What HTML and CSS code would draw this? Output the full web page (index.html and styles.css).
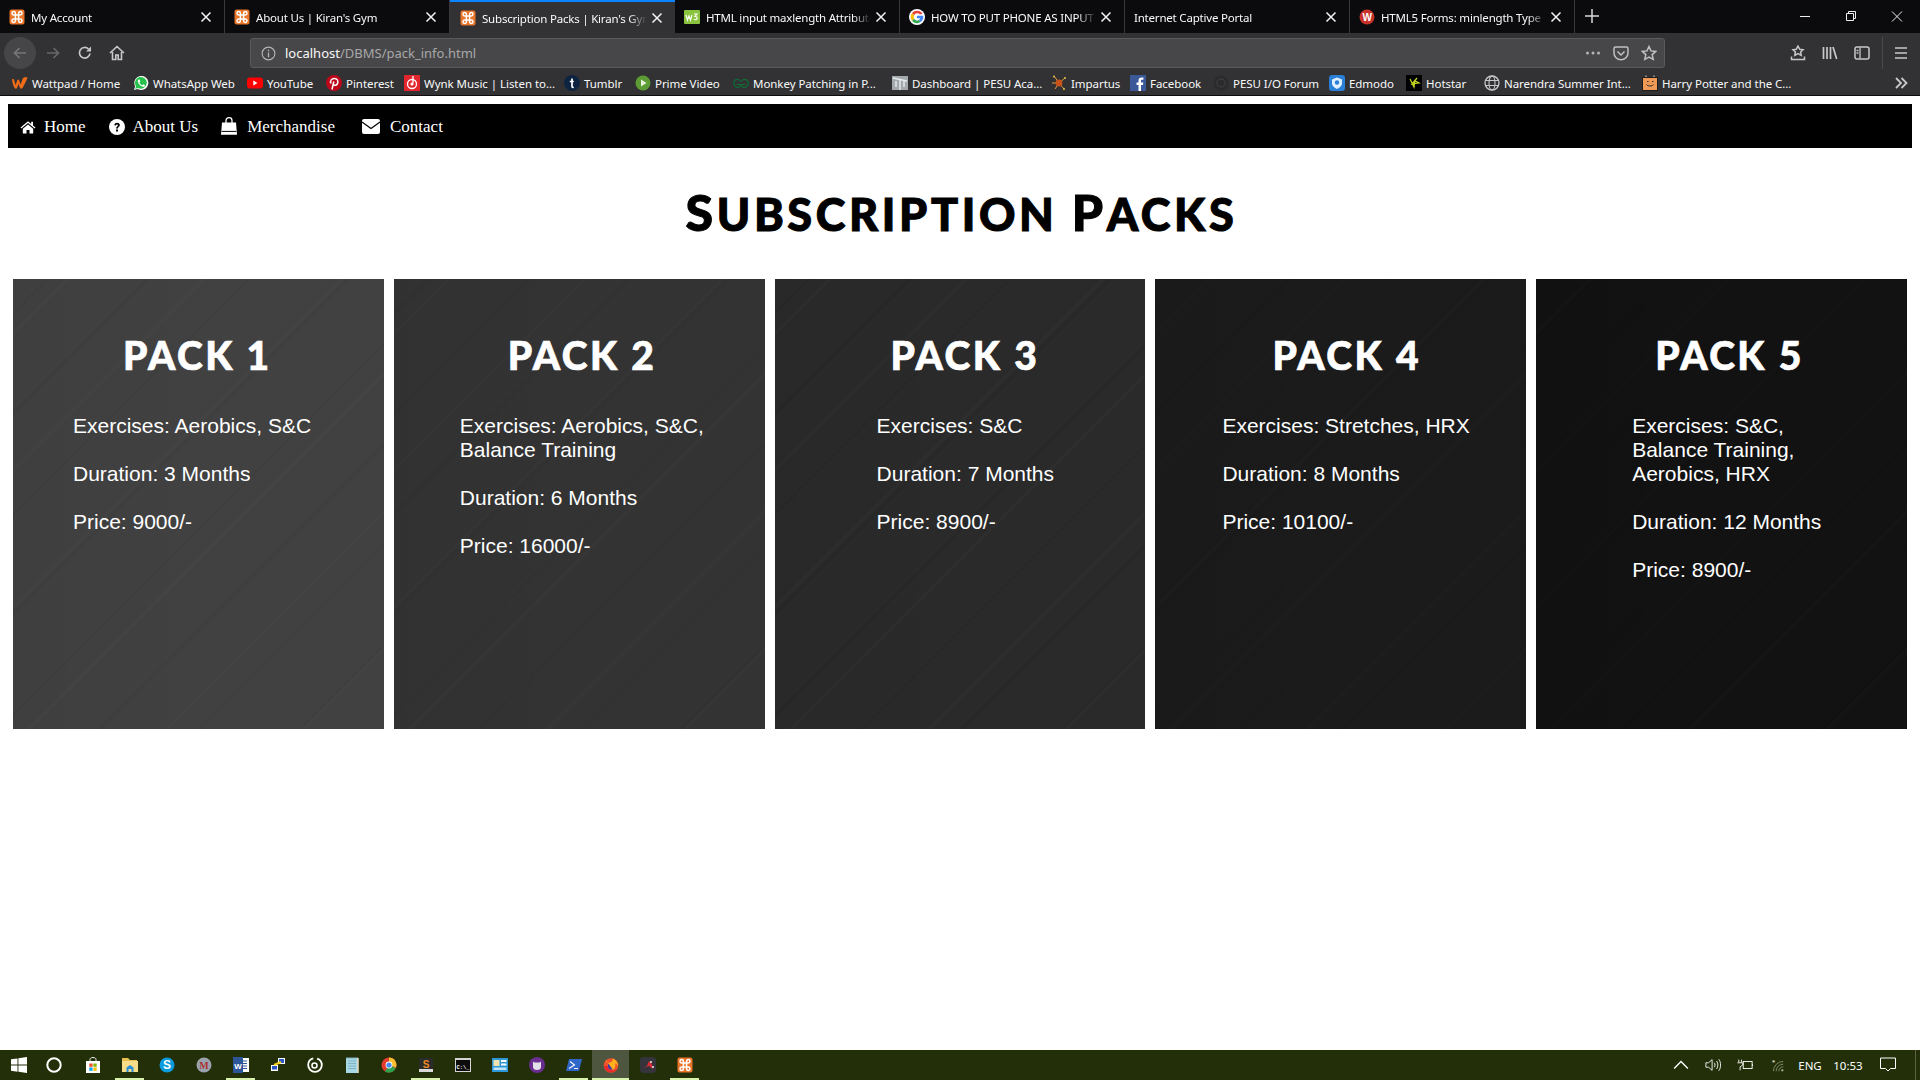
FILE: index.html
```html
<!DOCTYPE html>
<html lang="en">
<head>
<meta charset="utf-8">
<title>Subscription Packs | Kiran's Gym</title>
<link rel="stylesheet" href="styles.css">
</head>
<body>
<svg class="sprite" aria-hidden="true">
  <symbol id="xampp" viewBox="0 0 16 16"><rect x="0.5" y="0.5" width="15" height="15" rx="2" fill="#e8752a"/><path d="M6 6H4.700a1.700 1.700 0 1 1 1.700-1.700V11.700a1.700 1.700 0 1 1-1.700-1.700H11.300a1.700 1.700 0 1 1-1.700 1.700V4.300a1.700 1.700 0 1 1 1.700 1.700H6" fill="none" stroke="#fff" stroke-width="1.500"/></symbol>
  <symbol id="close" viewBox="0 0 12 12"><path d="M1.500 1.500l9 9M10.500 1.500l-9 9" stroke="#f4f4f4" stroke-width="1.500" fill="none"/></symbol>
</svg>

<header class="chrome">
  <div class="tabstrip">
    <div class="tab sep"><svg class="fav"><use href="#xampp"/></svg><span class="tab-label">My Account</span><svg class="tab-x"><use href="#close"/></svg></div>
    <div class="tab sep"><svg class="fav"><use href="#xampp"/></svg><span class="tab-label">About Us | Kiran's Gym</span><svg class="tab-x"><use href="#close"/></svg></div>
    <div class="tab active"><svg class="fav"><use href="#xampp"/></svg><span class="tab-label">Subscription Packs | Kiran's Gym</span><svg class="tab-x"><use href="#close"/></svg></div>
    <div class="tab sep"><svg class="fav" viewBox="0 0 16 16"><rect y="1" width="16" height="14" rx="1" fill="#8ac43f"/><path d="M2 6l1.500 5 1.500-4 1.500 4L8 6M10 5h3l-2 2.500c2 0 2.500 1 2 2.300-.5 1.200-2.400 1.200-3.200.2" fill="none" stroke="#fff" stroke-width="1.200"/></svg><span class="tab-label">HTML input maxlength Attribute</span><svg class="tab-x"><use href="#close"/></svg></div>
    <div class="tab sep"><svg class="fav" viewBox="0 0 16 16"><circle cx="8" cy="8" r="8" fill="#fff"/><path d="M13.500 4.800A6.300 6.300 0 0 0 3 4.300l2.200 1.900a3.300 3.300 0 0 1 5.700-.7z" fill="#ea4335"/><path d="M3 4.300a6.300 6.300 0 0 0 0 7.400l2.200-1.900a3.300 3.300 0 0 1 0-3.600z" fill="#fbbc05"/><path d="M3 11.700a6.300 6.300 0 0 0 8.700 1.400L9.600 11a3.300 3.300 0 0 1-4.400-1.200z" fill="#34a853"/><path d="M14.200 6.800H8v2.500h3.400a3 3 0 0 1-1.800 1.700l2.100 2.100c1.600-1.300 3-3.600 2.500-6.300z" fill="#4285f4"/></svg><span class="tab-label">HOW TO PUT PHONE AS INPUT</span><svg class="tab-x"><use href="#close"/></svg></div>
    <div class="tab sep no-fav"><span class="tab-label">Internet Captive Portal</span><svg class="tab-x"><use href="#close"/></svg></div>
    <div class="tab sep"><svg class="fav" viewBox="0 0 16 16"><circle cx="8" cy="8" r="7.500" fill="#c8322a"/><text x="8" y="11.500" class="fav-letter">W</text></svg><span class="tab-label">HTML5 Forms: minlength Type</span><svg class="tab-x"><use href="#close"/></svg></div>
    <svg class="newtab" viewBox="0 0 14 14"><path d="M7 0v14M0 7h14" stroke="#d8d8d8" stroke-width="1.500"/></svg>
    <div class="winbtns">
      <svg viewBox="0 0 46 33"><path d="M18 16.500h10" stroke="#eee"/></svg>
      <svg viewBox="0 0 46 33"><path d="M18.500 13.500h7v7h-7zM20.500 13.500v-2h7v7h-2" fill="none" stroke="#eee"/></svg>
      <svg viewBox="0 0 46 33"><path d="M18 11.500l10 10M28 11.500l-10 10" stroke="#eee"/></svg>
    </div>
  </div>

  <div class="toolbar">
    <span class="tbtn back"><svg viewBox="0 0 16 16"><path d="M14 8H3M7.500 3L2.500 8l5 5" fill="none" stroke="#77777a" stroke-width="1.700"/></svg></span>
    <span class="tbtn fwd"><svg viewBox="0 0 16 16"><path d="M2 8h11M8.500 3l5 5-5 5" fill="none" stroke="#68686a" stroke-width="1.700"/></svg></span>
    <span class="tbtn"><svg viewBox="0 0 16 16"><path d="M13 8.500A5.300 5.300 0 1 1 11.500 4" fill="none" stroke="#c8c8ca" stroke-width="1.700"/><path d="M14 1.500v5h-5z" fill="#c8c8ca"/></svg></span>
    <span class="tbtn"><svg viewBox="0 0 16 16"><path d="M1 8l7-6.500L15 8M3.500 7v7.500h3.300V10h2.400v4.500h3.300V7" fill="none" stroke="#c8c8ca" stroke-width="1.600"/></svg></span>
    <div class="urlbar">
      <svg class="info" viewBox="0 0 16 16"><circle cx="8" cy="8" r="6.800" fill="none" stroke="#b4b4b6" stroke-width="1.200"/><path d="M8 7v5M8 4v1.500" stroke="#b4b4b6" stroke-width="1.400"/></svg>
      <span class="url"><span class="url-host">localhost</span>/DBMS/pack_info.html</span>
      <span class="url-actions">
        <svg viewBox="0 0 16 16"><circle cx="2.500" cy="8" r="1.500" fill="#b4b4b6"/><circle cx="8" cy="8" r="1.500" fill="#b4b4b6"/><circle cx="13.500" cy="8" r="1.500" fill="#b4b4b6"/></svg>
        <svg viewBox="0 0 16 16"><path d="M1 3.500C1 2.500 1.700 2 2.500 2h11c.8 0 1.500.5 1.500 1.500V8A7 6.800 0 0 1 1 8zM4.500 6.500L8 10l3.500-3.500" fill="none" stroke="#c0c0c2" stroke-width="1.500"/></svg>
        <svg viewBox="0 0 16 16"><path d="M8 1.500l2 4.400 4.700.5-3.500 3.200 1 4.700L8 12l-4.200 2.300 1-4.700-3.500-3.200 4.700-.5z" fill="none" stroke="#c0c0c2" stroke-width="1.500"/></svg>
      </span>
    </div>
    <div class="toolbar-right">
      <span class="tbtn-r"><svg viewBox="0 0 16 16"><path d="M8 1l1.700 3.300 3.300.4-2.400 2.300.6 3.300L8 8.700 4.800 10.300l.6-3.300L3 4.700l3.300-.4zM1.500 11.500v3h13v-3" fill="none" stroke="#c8c8ca" stroke-width="1.500"/></svg></span>
      <span class="tbtn-r"><svg viewBox="0 0 16 16"><path d="M1.500 2v12M5 2v12M8.500 2v12M11 2l3.700 12" fill="none" stroke="#c8c8ca" stroke-width="1.700"/></svg></span>
      <span class="tbtn-r"><svg viewBox="0 0 16 16"><rect x="1" y="2" width="14" height="12" rx="2" fill="none" stroke="#c8c8ca" stroke-width="1.500"/><path d="M6 2.500v11M2.500 5.500h2M2.500 8h2" stroke="#c8c8ca" stroke-width="1.300"/></svg></span>
      <span class="tb-divider"></span>
      <span class="tbtn-r"><svg viewBox="0 0 16 16"><path d="M2 3h12M2 8h12M2 13h12" stroke="#c8c8ca" stroke-width="1.700"/></svg></span>
    </div>
  </div>

  <div class="bookmarks">
    <span class="bm"><svg viewBox="0 0 16 16"><path d="M0 4.500c1-.8 2-.3 2.300 1L3.500 10l1.800-4.800c.4-1 1.500-1 1.900 0L8.500 9.500l2.300-6c.7-1.300 3-1.700 4.700-1-1 3-3 7-5 10.500-.7 1-2 1-2.500 0L6.500 9 5 13c-.5 1-1.800 1-2.400 0C1.400 11 .4 7.500 0 4.500z" fill="#f26b17"/></svg>Wattpad / Home</span>
    <span class="bm"><svg viewBox="0 0 16 16"><path d="M1 15l1.100-3.800A7 7 0 1 1 4.800 14z" fill="#fff"/><path d="M2.200 13.800l.8-2.700A5.900 5.900 0 1 1 5.100 13z" fill="#27c24c"/><path d="M5.500 4.500c-1 1-1 2.500.5 4.500s3.500 3.200 5 2.700c.8-.3 1.200-1.200 1-1.500l-1.700-1-.8 1C8.500 10.200 6.800 8.600 6.400 7.400l.9-.8-.8-2z" fill="#fff"/></svg>WhatsApp Web</span>
    <span class="bm"><svg viewBox="0 0 16 16"><rect y="2.500" width="16" height="11" rx="3" fill="#f00"/><path d="M6.300 5.500v5L10.500 8z" fill="#fff"/></svg>YouTube</span>
    <span class="bm"><svg viewBox="0 0 16 16"><circle cx="8" cy="8" r="8" fill="#bd081c"/><path d="M6 14.500L7.800 6.500M5 8.500C3.500 5.500 6 3.500 8.300 3.500c3 0 4 2.300 3.400 4.500-.6 2.300-3 3-4.200 1.500" fill="none" stroke="#fff" stroke-width="1.500"/></svg>Pinterest</span>
    <span class="bm"><svg viewBox="0 0 16 16"><rect width="16" height="16" rx="1" fill="#e3262e"/><circle cx="8" cy="9" r="4.500" fill="none" stroke="#fff" stroke-width="1.300"/><circle cx="8" cy="9" r="1.600" fill="#fff"/><path d="M9 1v7" stroke="#fff" stroke-width="1.300"/></svg>Wynk Music | Listen to...</span>
    <span class="bm"><svg viewBox="0 0 16 16"><circle cx="8" cy="8" r="8" fill="#0e2340"/><path d="M8 3.500v8c0 .8.6 1 1.800 1M5.800 6.500h4" stroke="#fff" stroke-width="1.700" fill="none"/></svg>Tumblr</span>
    <span class="bm"><svg viewBox="0 0 16 16"><circle cx="8" cy="8" r="7.500" fill="#5d9c35"/><path d="M6 4.500v7L11.500 8z" fill="#e8f3dc"/></svg>Prime Video</span>
    <span class="bm"><svg viewBox="0 0 16 16"><path d="M7.500 6.500C6.500 3.500 2 3.500 1 7s2 6 4.500 5.300c1.200-.3 2-1.300 2-2.800H3.500M8.500 6.500c1-3 5.500-3 6.500.5s-2 6-4.500 5.300c-1.200-.3-2-1.300-2-2.800h4" fill="none" stroke="#0f6b36" stroke-width="1.200"/></svg>Monkey Patching in P...</span>
    <span class="bm"><svg viewBox="0 0 16 16"><rect y="1" width="16" height="14" fill="#a3a9ad"/><path d="M1 3l14 3M8 4.500V15M4 6v6M12 6v6" stroke="#e8ebec" stroke-width="1.400" fill="none"/></svg>Dashboard | PESU Aca...</span>
    <span class="bm"><svg viewBox="0 0 16 16"><path d="M8 8L3 1M8 8l6-5M8 8H1M8 8l5 6M8 8l-4 6" stroke="#d9a03a" stroke-width="1"/><circle cx="8" cy="8" r="3.400" fill="#c9521b"/><circle cx="3" cy="1.500" r="1" fill="#e7c14a"/><circle cx="14" cy="3" r="1" fill="#e7c14a"/><circle cx="13" cy="14" r="1" fill="#e7c14a"/></svg>Impartus</span>
    <span class="bm"><svg viewBox="0 0 16 16"><rect width="16" height="16" fill="#3b5998"/><path d="M11 16v-6h2l.3-2.500H11V6c0-.8.3-1.200 1.200-1.200h1.200V2.500c-.4 0-1.100-.1-1.800-.1-1.900 0-3.100 1.200-3.100 3.200v1.900h-2V10h2v6z" fill="#fff"/></svg>Facebook</span>
    <span class="bm"><svg viewBox="0 0 16 16"><circle cx="8" cy="8" r="7.500" fill="#2b2b2d"/><circle cx="8" cy="8" r="4" fill="none" stroke="#3a3a3c" stroke-width="1.500"/></svg>PESU I/O Forum</span>
    <span class="bm"><svg viewBox="0 0 16 16"><rect width="16" height="16" rx="3" fill="#2a7fd6"/><path d="M3 4.500l5-2 5 2v4c0 2.500-2.500 4.500-5 5.500-2.500-1-5-3-5-5.500z" fill="#dff0ff"/><circle cx="8" cy="7.500" r="2.200" fill="#2a7fd6"/></svg>Edmodo</span>
    <span class="bm"><svg viewBox="0 0 16 16"><rect width="16" height="16" fill="#000"/><path d="M4 4l4 8 1-6 4 2-7 1 5-6" fill="none" stroke="#c8d820" stroke-width="1.200"/></svg>Hotstar</span>
    <span class="bm"><svg viewBox="0 0 16 16"><circle cx="8" cy="8" r="7" fill="none" stroke="#c8c8ca" stroke-width="1.300"/><ellipse cx="8" cy="8" rx="3" ry="7" fill="none" stroke="#c8c8ca" stroke-width="1.100"/><path d="M1.500 5.500h13M1.500 10.500h13" stroke="#c8c8ca" stroke-width="1.100"/></svg>Narendra Summer Int...</span>
    <span class="bm"><svg viewBox="0 0 16 16"><rect x=".5" y="2.500" width="15" height="13" fill="#f19a55" stroke="#1c1c1c"/><path d="M4 2V.5M12 2V.5" stroke="#ddd"/><path d="M4.500 9.500c1 2 6 2 7 0" fill="none" stroke="#333"/><path d="M5 6.500h1.500M10 6.500h1.500" stroke="#333"/></svg>Harry Potter and the C...</span>
    <svg class="bm-more" viewBox="0 0 14 14"><path d="M2 2l5 5-5 5M7.500 2l5 5-5 5" fill="none" stroke="#c8c8ca" stroke-width="1.800"/></svg>
  </div>
</header>

<main class="page">
  <nav class="sitenav">
    <a class="nav-link"><svg viewBox="0 0 16 16"><path d="M8 2.200L.5 8.500l.9 1L8 4l6.600 5.500.9-1-2.500-2.100V2.800h-1.800v2.100zM2.800 9.800v4.700h3.700v-3.400h3v3.400h3.700V9.800L8 5.500z" fill="#fff"/></svg>Home</a>
    <a class="nav-link"><svg viewBox="0 0 16 16"><circle cx="8" cy="8" r="8" fill="#fff"/><path d="M5.300 6.200C5.500 4.600 6.700 3.800 8.100 3.800c1.600 0 2.800 1 2.800 2.300 0 1.800-2 1.900-2 3.400H7.100c0-2.300 1.900-2.300 1.900-3.300 0-.5-.4-.8-1-.8s-1 .4-1.100 1z M7 10.500h2v2H7z" fill="#000"/></svg>About Us</a>
    <a class="nav-link bag"><svg viewBox="0 0 16 18"><path d="M5 6.500V3.500C5 1.800 6.300.7 8 .7s3 1.100 3 2.800v3" fill="none" stroke="#fff" stroke-width="1.300"/><path d="M1 5.500h14l1 12.300H0z" fill="#fff"/><path d="M.6 14.400h14.800" stroke="#000"/></svg>Merchandise</a>
    <a class="nav-link mail"><svg viewBox="0 0 18 15"><rect width="18" height="15" rx="2" fill="#fff"/><path d="M0 3l9 6.500L18 3" fill="none" stroke="#000" stroke-width="1.300"/></svg>Contact</a>
  </nav>

  <h1 class="title"><span class="init">S</span>ubscription <span class="init">P</span>acks</h1>

  <section class="packs">
    <article class="pack pack-1">
      <h2>Pack 1</h2>
      <p>Exercises: Aerobics, S&amp;C</p>
      <p>Duration: 3 Months</p>
      <p>Price: 9000/-</p>
    </article>
    <article class="pack pack-2">
      <h2>Pack 2</h2>
      <p>Exercises: Aerobics, S&amp;C,<br>Balance Training</p>
      <p>Duration: 6 Months</p>
      <p>Price: 16000/-</p>
    </article>
    <article class="pack pack-3">
      <h2>Pack 3</h2>
      <p>Exercises: S&amp;C</p>
      <p>Duration: 7 Months</p>
      <p>Price: 8900/-</p>
    </article>
    <article class="pack pack-4">
      <h2>Pack 4</h2>
      <p>Exercises: Stretches, HRX</p>
      <p>Duration: 8 Months</p>
      <p>Price: 10100/-</p>
    </article>
    <article class="pack pack-5">
      <h2>Pack 5</h2>
      <p>Exercises: S&amp;C,<br>Balance Training,<br>Aerobics, HRX</p>
      <p>Duration: 12 Months</p>
      <p>Price: 8900/-</p>
    </article>
  </section>
</main>

<footer class="taskbar">
  <span class="ti"><svg viewBox="0 0 16 16"><path d="M0 2.300l6.500-.9v6.200H0zM7.400 1.300L16 0v7.600H7.400zM0 8.500h6.500v6.200L0 13.800zM7.400 8.500H16V16l-8.600-1.200z" fill="#fff"/></svg></span>
  <span class="ti ti-cortana"><svg viewBox="0 0 16 16"><circle cx="8" cy="8" r="6.700" fill="none" stroke="#fff" stroke-width="2"/></svg></span>
  <span class="ti"><svg viewBox="0 0 16 16"><path d="M5 4V2.500C5 1.200 6.200.5 8 .5s3 .7 3 2V4" fill="none" stroke="#eee"/><rect x="1" y="4" width="14" height="12" fill="#fff"/><rect x="4.300" y="6.500" width="3.300" height="3.300" fill="#f25022"/><rect x="8.400" y="6.500" width="3.300" height="3.300" fill="#7fba00"/><rect x="4.300" y="10.500" width="3.300" height="3.300" fill="#00a4ef"/><rect x="8.400" y="10.500" width="3.300" height="3.300" fill="#ffb900"/></svg></span>
  <span class="ti run"><svg viewBox="0 0 16 16"><path d="M0 1h6l2 2h7v2H0z" fill="#e8bf4f"/><rect y="4" width="16" height="11" fill="#f7dc8a"/><path d="M4.500 15v-4.500L8 8l3.500 2.500V15H9.500v-3h-3v3z" fill="#2a8fd8"/></svg></span>
  <span class="ti"><svg viewBox="0 0 16 16"><circle cx="8" cy="8" r="7.500" fill="#0a9cdd"/><text x="8" y="12.300" class="ti-letter">S</text></svg></span>
  <span class="ti"><svg viewBox="0 0 16 16"><circle cx="8" cy="8" r="7.500" fill="#9aa3ad"/><text x="8" y="12" class="ti-letter ti-m">M</text></svg></span>
  <span class="ti run"><svg viewBox="0 0 16 16"><rect x="4" y="1" width="12" height="14" fill="#fff"/><path d="M10 4h4M10 6.500h4M10 9h4M10 11.500h4" stroke="#2b579a"/><rect y="0" width="10" height="16" fill="#2b579a"/><text x="5" y="11.500" class="ti-letter ti-w">W</text></svg></span>
  <span class="ti"><svg viewBox="0 0 16 16"><rect x="8" y="1" width="7" height="6" fill="#fff"/><rect x="9" y="2" width="5" height="4" fill="#2c55c9"/><rect x="1" y="8" width="7" height="6" fill="#fff"/><rect x="2" y="9" width="5" height="3.500" fill="#2c55c9"/><path d="M4 8l7-3" stroke="#f2d21d" stroke-width="2"/></svg></span>
  <span class="ti"><svg viewBox="0 0 16 16"><circle cx="8" cy="8" r="6.800" fill="none" stroke="#fff" stroke-width="1.800" stroke-dasharray="30 4"/><circle cx="7.500" cy="8.500" r="2.500" fill="none" stroke="#fff" stroke-width="1.600"/></svg></span>
  <span class="ti"><svg viewBox="0 0 16 16"><rect x="2" y="1" width="12" height="15" fill="#a8d8e6"/><path d="M2 1h12M4 4h8M4 6.500h8M4 9h8M4 11.500h8" stroke="#7eb2c4"/><path d="M14 1v15" stroke="#e6dcc0" stroke-width="1.500"/></svg></span>
  <span class="ti"><svg viewBox="0 0 16 16"><circle cx="8" cy="8" r="7.500" fill="#e33b2e"/><path d="M8 8l6.900 3A7.500 7.500 0 0 1 4 14.400z" fill="#2ea24d"/><path d="M8 .5a7.500 7.500 0 0 1 7 10L8 8z" fill="#fbc02d"/><circle cx="8" cy="8" r="3.400" fill="#fff"/><circle cx="8" cy="8" r="2.600" fill="#4688f1"/></svg></span>
  <span class="ti run"><svg viewBox="0 0 16 16"><rect x="1" y="1" width="14" height="14" rx="2" fill="#2b2b2b"/><rect x="1" y="12" width="14" height="3" fill="#d8d8d8"/><text x="8" y="10.500" class="ti-letter ti-sub">S</text></svg></span>
  <span class="ti"><svg viewBox="0 0 16 16"><rect y="1" width="16" height="14" fill="#d4d4d4"/><rect x="1" y="3" width="14" height="11" fill="#0c0c0c"/><text x="8" y="11.500" class="ti-letter ti-cmd">C:\_</text></svg></span>
  <span class="ti"><svg viewBox="0 0 16 16"><rect y="1" width="16" height="14" fill="#2d97d8"/><rect x="1.500" y="3" width="6" height="6" fill="#f1e3b0"/><rect x="9" y="3" width="5.500" height="2" fill="#fff"/><rect x="9" y="6.500" width="5.500" height="2" fill="#fff"/><rect x="1.500" y="10.500" width="13" height="2.500" fill="#bfe4f7"/></svg></span>
  <span class="ti"><svg viewBox="0 0 16 16"><circle cx="8" cy="8" r="8" fill="#6a2d90"/><path d="M4 4.500l1.500 1h5l1.500-1V10c0 1.800-1.500 3-4 3s-4-1.200-4-3z" fill="#e4e0ea"/></svg></span>
  <span class="ti run"><svg viewBox="0 0 16 16"><path d="M3 2h13l-3 12H0z" fill="#2f68c9"/><path d="M4 4.500l4.500 3.500L3 11.500M8 11.500h4" fill="none" stroke="#fff" stroke-width="1.100"/></svg></span>
  <span class="ti run current"><svg viewBox="0 0 16 16"><circle cx="8" cy="8.500" r="7.300" fill="#f0502b"/><circle cx="8.500" cy="9" r="3.600" fill="#3b3ba8"/><path d="M3 3c0 3 2 3 4 2.500 2-.5 3-1 2.500-4 3 1 6 4 5.500 8-.5-1.500-1.500-3-3-3 1 2 .5 5-2 6.500" fill="#ffb21e"/><path d="M1 9c.5 3 3 6 7 6.300 3 0 5-1.500 6-3.300-2 1.500-5 2-7 1-2-1-2.500-2.500-2-4z" fill="#e8262f"/></svg></span>
  <span class="ti"><svg viewBox="0 0 16 16"><rect width="16" height="16" rx="3" fill="#34343a"/><path d="M3 11l4-2 2-5 3 3 1 5-4-3z" fill="#d92b35"/><circle cx="11" cy="5" r="1" fill="#eee"/><circle cx="13" cy="10" r="1" fill="#eee"/></svg></span>
  <span class="ti run"><svg><use href="#xampp"/></svg></span>

  <div class="tray">
    <span class="tray-i"><svg viewBox="0 0 14 8"><path d="M1 7l6-6 6 6" fill="none" stroke="#fff" stroke-width="1.200"/></svg></span>
    <span class="tray-i"><svg viewBox="0 0 18 16"><path d="M1 5.500h3L8 2v12l-4-3.500H1zM10.500 5.500c1 1.500 1 3.500 0 5M13 3.500c2 2.500 2 6.500 0 9M15.500 1.500c2.700 3.500 2.700 9.500 0 13" fill="none" stroke="#fff"/></svg></span>
    <span class="tray-i"><svg viewBox="0 0 18 14"><path d="M2 1v3M5 1v3M.5 4.500h6v2.500l-3 2V13" fill="none" stroke="#fff"/><rect x="7" y="3" width="10" height="8" fill="none" stroke="#fff"/><path d="M17.500 6v2" stroke="#fff"/></svg></span>
    <span class="tray-i"><svg viewBox="0 0 18 16"><path d="M5 15A11 11 0 0 1 16 4M8 15A8 8 0 0 1 16 7M11 15a5 5 0 0 1 5-5" fill="none" stroke="#8c9478"/><circle cx="15" cy="14" r="1.300" fill="#aeb59c"/><text x="3.500" y="8" class="wifi-star">*</text></svg></span>
    <span class="tray-text eng">ENG</span>
    <span class="tray-text clock">10:53</span>
    <span class="tray-i notif"><svg viewBox="0 0 16 15"><path d="M.5.500h15v10.500h-5L8 13.500 5.500 11h-5z" fill="none" stroke="#fff"/></svg></span>
    <span class="showdesk"></span>
  </div>
</footer>
</body>
</html>
```

FILE: styles.css
```css
* { box-sizing: border-box; }

html, body { margin: 0; padding: 0; }

body {
  width: 1920px;
  height: 1080px;
  overflow: hidden;
  display: flex;
  flex-direction: column;
  background: #fff;
}

.sprite { position: absolute; width: 0; height: 0; }

/* Browser chrome */
.chrome {
  flex: 0 0 96px;
  display: flex;
  flex-direction: column;
  font-family: "Noto Sans", sans-serif;
  font-size: 11.5px;
  color: #f9f9fa;
  background: #323234;
  border-bottom: 1px solid #0c0c0d;
}

.tabstrip {
  flex: 0 0 33px;
  display: flex;
  align-items: stretch;
  background: #0b0b0d;
}

.tab {
  flex: 0 0 225px;
  width: 225px;
  min-width: 0;
  display: flex;
  align-items: center;
  padding: 0 12px 0 9px;
  white-space: nowrap;
  letter-spacing: -0.2px;
}

.tab.sep { border-right: 1px solid #3a3a3c; }

.tab.active {
  background: #323234;
  border-top: 2px solid #0a84ff;
  padding-left: 10px;
}

.fav { width: 16px; height: 16px; flex: none; margin-right: 6px; }

.fav-letter {
  font: 700 10px "Liberation Sans", sans-serif;
  fill: #fff;
  text-anchor: middle;
}

.tab-label {
  flex: 1;
  min-width: 0;
  overflow: hidden;
  padding-top: 1px;
  -webkit-mask-image: linear-gradient(to left, transparent 0, #000 18px);
  mask-image: linear-gradient(to left, transparent 0, #000 18px);
}

.tab-x { width: 12px; height: 12px; flex: none; margin-left: 4px; }

.newtab { width: 14px; height: 14px; margin: 9px 0 0 10px; }

.winbtns { margin-left: auto; display: flex; }
.winbtns svg { width: 46px; height: 33px; display: block; }

.toolbar {
  flex: 0 0 40px;
  display: flex;
  align-items: center;
  padding: 0 0 0 4px;
}

.tbtn {
  flex: 0 0 32px;
  height: 32px;
  display: flex;
  align-items: center;
  justify-content: center;
}

.tbtn svg { width: 16px; height: 16px; }
.tbtn.back { background: #464648; border-radius: 50%; }
.tbtn.fwd { margin-left: 1px; }

.urlbar {
  flex: 0 0 1415px;
  height: 30px;
  margin-left: 117px;
  padding: 0 7px 0 10px;
  display: flex;
  align-items: center;
  background: #474749;
  border: 1px solid #5a5a5c;
  border-radius: 3px;
  font-size: 13px;
  color: #a8a8aa;
}

.info { width: 15px; height: 15px; margin-right: 9px; }
.url-host { color: #f9f9fa; }
.url-actions { margin-left: auto; display: flex; gap: 12px; }
.url-actions svg { width: 16px; height: 16px; display: block; }

.toolbar-right {
  margin-left: 125px;
  display: flex;
  align-items: center;
  gap: 16px;
}

.tbtn-r { display: flex; }
.tbtn-r svg { width: 16px; height: 16px; }

.tb-divider { width: 1px; height: 32px; background: #4a4a4c; margin: 0 -6px 0 -4px; }

.bookmarks {
  flex: 1;
  display: grid;
  grid-template-columns: 121px 114px 79px 78px 160px 71px 98px 159px 159px 79px 83px 116px 77px 78px 158px 240px 1fr;
  align-items: center;
  padding: 0 12px 2px;
  font-size: 11.500px;
  letter-spacing: -0.05px;
  white-space: nowrap;
}

.bm { display: flex; align-items: center; gap: 4px; }
.bm svg { width: 16px; height: 16px; flex: none; }

.bm-more { width: 14px; height: 14px; justify-self: end; }

/* Page */
.page {
  flex: 1;
  padding: 8px;
  min-height: 0;
}

.sitenav {
  height: 44px;
  background: #000;
  display: flex;
  align-items: center;
  padding: 1px 0 0 12px;
  gap: 23px;
}

.nav-link {
  display: flex;
  align-items: center;
  gap: 8px;
  font: 17px "Liberation Serif", serif;
  color: #fff;
}

.nav-link svg { width: 16px; height: 16px; flex: none; }
.nav-link.bag { gap: 10px; }
.nav-link.bag svg { height: 18px; margin-top: -1px; }
.nav-link.mail { gap: 10px; margin-left: 4px; }
.nav-link.mail svg { width: 18px; height: 15px; }

.title {
  margin: 0;
  height: 131px;
  padding: 36px 0 0 3px;
  text-align: center;
  font: 900 45px/56px Lato, sans-serif;
  text-transform: uppercase;
  letter-spacing: 3.600px;
  color: #000;
  -webkit-text-stroke: 1px #000;
}

.init { font-size: 50px; }

.packs {
  display: grid;
  grid-template-columns: repeat(5, 1fr);
  gap: 10px;
  margin: 0 5px;
}

.pack {
  height: 450px;
  color: #fff;
  font: 21px/24px "Liberation Sans", sans-serif;
  background-image:
    repeating-linear-gradient(135deg, transparent 0 37px, var(--hi) 37px 40px, transparent 40px 97px),
    repeating-linear-gradient(135deg, transparent 0 23px, var(--lo) 23px 26px, transparent 26px 71px),
    linear-gradient(90deg, var(--lo), transparent 55%);
}

.pack h2 {
  margin: 0 0 34px;
  padding-top: 51px;
  font: 900 39px/50px Lato, sans-serif;
  text-transform: uppercase;
  letter-spacing: 2.500px;
  white-space: nowrap;
  -webkit-text-stroke: 0.7px #fff;
}

.pack p { margin: 0 0 24px; white-space: nowrap; }

.pack-1 { --hi: rgba(255,255,255,.012); --lo: rgba(0,0,0,.03); padding-left: 60px; background-color: #414141; }
.pack-2 { --hi: rgba(255,255,255,.012); --lo: rgba(0,0,0,.03); padding-left: 66px; background-color: #333; }
.pack-3 { --hi: rgba(255,255,255,.01); --lo: rgba(0,0,0,.04); padding-left: 102px; background-color: #2a2a2a; }
.pack-4 { --hi: rgba(255,255,255,.008); --lo: rgba(0,0,0,.05); padding-left: 67px; background-color: #1b1b1b; }
.pack-5 { --hi: rgba(255,255,255,.008); --lo: rgba(0,0,0,.06); padding-left: 96px; background-color: #121212; }

.pack-1 h2 { margin-left: 50px; }
.pack-2 h2 { margin-left: 48px; }
.pack-3 h2 { margin-left: 14px; }
.pack-4 h2 { margin-left: 50px; }
.pack-5 h2 { margin-left: 23px; }

/* Taskbar */
.taskbar {
  flex: 0 0 30px;
  display: flex;
  align-items: stretch;
  background: #222f08;
  color: #fff;
}

.ti {
  flex: 0 0 37px;
  display: flex;
  align-items: center;
  justify-content: center;
  position: relative;
}

.ti svg { width: 16px; height: 16px; }
.ti-cortana svg { margin-right: 4px; }
.ti.current { background: #4e5640; }

.ti.run::after {
  content: "";
  position: absolute;
  left: 4px;
  right: 4px;
  bottom: 0;
  height: 2px;
  background: #d9f3ac;
}

.ti.current::after { left: 0; right: 0; }

.ti-letter {
  font: 700 12px "Liberation Sans", sans-serif;
  fill: #fff;
  text-anchor: middle;
}

.ti-m { font: 700 10px "Liberation Serif", serif; fill: #a33; }
.ti-w { font-size: 8px; }
.ti-sub { font-size: 10px; fill: #f08a24; }
.ti-cmd { font: 700 5.500px "Liberation Mono", monospace; }

.tray {
  margin-left: auto;
  display: flex;
  align-items: center;
  font: 12px "Noto Sans", sans-serif;
}

.tray-i { flex: 0 0 32px; display: flex; justify-content: center; }
.tray-i svg { width: 16px; height: 16px; display: block; }
.tray-text { text-align: center; font-size: 11.500px; }
.eng { width: 34px; }
.clock { width: 42px; }
.notif { flex: 0 0 44px; padding-right: 6px; }
.showdesk { width: 5px; height: 100%; border-left: 1px solid #5a6246; margin-left: 2px; }

.wifi-star { font: 9px "Liberation Sans", sans-serif; fill: #fff; }
```
